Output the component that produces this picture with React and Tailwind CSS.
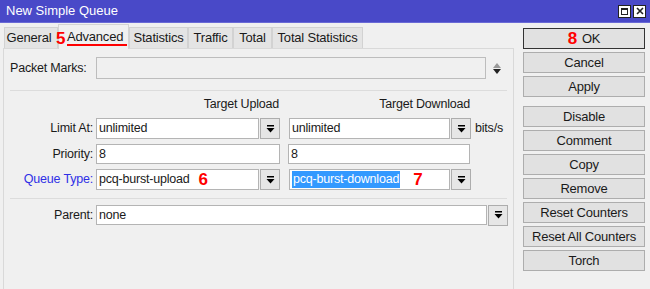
import React from 'react';

// Small dropdown arrow used by the combo boxes (bar over a triangle)
const DropIcon = () => (
    <svg width="9" height="8" viewBox="0 0 9 8">
        <rect x="1" y="0" width="7" height="1.5" fill="#000" />
        <path d="M0.5 3 L8.5 3 L4.5 7.5 Z" fill="#000" />
    </svg>
);

const DropButton = ({ className = '' }) => (
    <div className={`flex items-center justify-center bg-[#e6e6e6] border border-[#adadad] ${className}`}>
        <DropIcon />
    </div>
);

const TextBox = ({ value, className = '', selected = false, children }) => (
    <div className={`flex items-center bg-white border border-[#b4b4b4] pl-[2px] ${className}`}>
        {selected ? (
            <span className="bg-[#3399ff] text-white leading-[17px] px-[1px]">{value}</span>
        ) : (
            <span>{value}</span>
        )}
        {children}
    </div>
);

const Num = ({ n, className = '' }) => (
    <span className={`text-[#ff0000] font-bold text-[17px] leading-none ${className}`} style={{ fontFamily: '"Liberation Sans", Arial, sans-serif' }}>
        {n}
    </span>
);

const tabs = ['General', 'Advanced', 'Statistics', 'Traffic', 'Total', 'Total Statistics'];
const tabWidths = { General: 'w-[54px]', Statistics: 'w-[59px]', Traffic: 'w-[45px]', Total: 'w-[39px]', 'Total Statistics': 'w-[91px]' };

const buttons = ['Cancel', 'Apply', null, 'Disable', 'Comment', 'Copy', 'Remove', 'Reset Counters', 'Reset All Counters', 'Torch'];

const Label = ({ children, className = '' }) => (
    <div className={`w-[86px] shrink-0 text-right pr-[3px] ${className}`}>{children}</div>
);

export default function App() {
    return (
        <div
            className="w-[650px] h-[289px] bg-[#f0f0f0] flex flex-col overflow-hidden text-[12.5px] text-[#1a1a1a] tracking-[-0.2px]"
            style={{ fontFamily: '"Liberation Sans", Arial, sans-serif' }}
        >
            {/* Title bar */}
            <div className="h-[23px] shrink-0 bg-[#4949c8] border-b border-[#6a6ad6] flex items-center justify-between pl-[6px] pr-[4px]">
                <span className="text-white text-[13px] tracking-normal">New Simple Queue</span>
                <div className="flex gap-[2px]">
                    <div className="w-[13px] h-[13px] bg-white border border-[#222] flex items-center justify-center">
                        <div className="w-[7px] h-[7px] border border-[#222] border-t-2"></div>
                    </div>
                    <div className="w-[13px] h-[13px] bg-white border border-[#222] flex items-center justify-center">
                        <svg width="8" height="8" viewBox="0 0 8 8">
                            <path d="M1 1 L7 7 M7 1 L1 7" stroke="#222" strokeWidth="1.6" />
                        </svg>
                    </div>
                </div>
            </div>

            <div className="flex flex-1 min-h-0">
                {/* Left: tabs + panel */}
                <div className="w-[511px] ml-[3px] flex flex-col">
                    <div className="flex items-end h-[25px] ml-[1px] relative z-10">
                        {tabs.map((t) =>
                            t === 'Advanced' ? (
                                <div key={t} className="relative w-[71px] h-[25px] bg-[#f0f0f0] border border-b-0 border-[#d4d4d4] flex items-center pl-[8px] -mb-px">
                                    <Num n="5" className="absolute left-[-3px] top-[5px]" />
                                    <span className="text-[13px]">Advanced</span>
                                    <div className="absolute left-[8px] top-[19px] w-[60px] h-[2px] bg-[#ff0000]"></div>
                                </div>
                            ) : (
                                <div key={t} className={`${tabWidths[t]} h-[21px] bg-[#e4e4e4] border border-[#d2d2d2] border-b-0 flex items-center justify-center text-[13px]`}>
                                    {t === 'General' ? <span className="pr-[4px]">{t}</span> : t}
                                </div>
                            )
                        )}
                    </div>

                    <div className="flex-1 border border-b-0 border-[#d9d9d9] pl-[6px] pr-[4px] pt-[8px]">
                        {/* Packet marks */}
                        <div className="flex items-center h-[22px]">
                            <div className="w-[86px] shrink-0">Packet Marks:</div>
                            <div className="w-[390px] h-[22px] border border-[#bdbdbd] bg-[#f0f0f0]"></div>
                            <div className="ml-[7px] flex flex-col items-center gap-[1px]">
                                <svg width="8" height="5" viewBox="0 0 8 5"><path d="M0 5 L4 0 L8 5 Z" fill="#9a9a9a" /></svg>
                                <svg width="8" height="5" viewBox="0 0 8 5"><path d="M0 0 L8 0 L4 5 Z" fill="#222" /></svg>
                            </div>
                        </div>

                        <div className="h-px bg-[#dcdcdc] mt-[11px] mr-[2px]"></div>

                        {/* Column headers */}
                        <div className="flex h-[26px] items-start pt-[4px]">
                            <div className="w-[86px]"></div>
                            <div className="w-[183px] text-right">Target Upload</div>
                            <div className="w-[9px]"></div>
                            <div className="w-[182px] text-right">Target Download</div>
                        </div>

                        {/* Limit At */}
                        <div className="flex items-center h-[21px] mt-[1px]">
                            <Label>Limit At:</Label>
                            <TextBox value="unlimited" className="w-[163px] h-[21px]" />
                            <DropButton className="w-[20px] h-[21px] ml-[1px]" />
                            <div className="w-[9px]"></div>
                            <TextBox value="unlimited" className="w-[161px] h-[21px]" />
                            <DropButton className="w-[20px] h-[21px] ml-[1px]" />
                            <span className="ml-[4px]">bits/s</span>
                        </div>

                        {/* Priority */}
                        <div className="flex items-center h-[20px] mt-[5px]">
                            <Label>Priority:</Label>
                            <TextBox value="8" className="w-[184px] h-[20px]" />
                            <div className="w-[8px]"></div>
                            <TextBox value="8" className="w-[182px] h-[20px]" />
                        </div>

                        {/* Queue Type */}
                        <div className="flex items-center h-[21px] mt-[5px]">
                            <Label className="text-[#2f2fe6]">Queue Type:</Label>
                            <TextBox value="pcq-burst-upload" className="w-[163px] h-[21px]">
                                <Num n="6" className="ml-[9px]" />
                            </TextBox>
                            <DropButton className="w-[20px] h-[21px] ml-[1px]" />
                            <div className="w-[9px]"></div>
                            <TextBox value="pcq-burst-download" selected className="w-[161px] h-[21px]">
                                <Num n="7" className="ml-[13px]" />
                            </TextBox>
                            <DropButton className="w-[20px] h-[21px] ml-[1px]" />
                        </div>

                        <div className="h-px bg-[#dcdcdc] mt-[8px] mr-[2px]"></div>

                        {/* Parent */}
                        <div className="flex items-center h-[20px] mt-[6px]">
                            <Label>Parent:</Label>
                            <TextBox value="none" className="w-[391px] h-[20px]" />
                            <DropButton className="w-[20px] h-[21px] ml-[1px]" />
                        </div>
                    </div>
                </div>

                {/* Right: action buttons */}
                <div className="w-[122px] ml-[9px] pt-[5px] flex flex-col">
                    <div className="h-[21px] border border-[#333] bg-[#e1e1e1] flex items-center justify-center gap-[5px] text-[13px]">
                        <Num n="8" />
                        <span>OK</span>
                    </div>
                    {buttons.map((b, i) =>
                        b === null ? (
                            <div key={i} className="h-[6px]"></div>
                        ) : (
                            <div key={b} className="h-[21px] mt-[3px] border border-[#adadad] bg-[#e1e1e1] flex items-center justify-center text-[13px]">
                                {b}
                            </div>
                        )
                    )}
                </div>
            </div>
        </div>
    );
}
